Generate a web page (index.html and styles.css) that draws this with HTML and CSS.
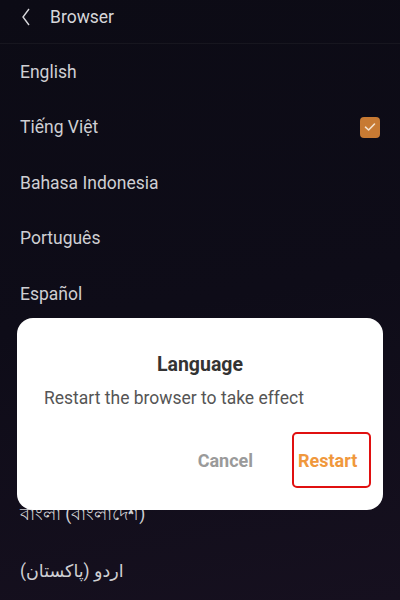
FILE: index.html
```html
<!DOCTYPE html>
<html>
<head>
<meta charset="utf-8">
<link rel="stylesheet" href="styles.css">
</head>
<body>
<div class="screen">
  <header class="top">
    <svg class="back" width="10" height="20" viewBox="0 0 10 20"><path d="M8 2 L2 10 L8 18" fill="none" stroke="#d8d8dc" stroke-width="1.4"/></svg>
    <span class="title">Browser</span>
  </header>
  <ul class="list">
    <li class="row">English</li>
    <li class="row">Tiếng Việt<span class="check"><svg width="12" height="10" viewBox="0 0 12 10"><path d="M1.5 5.2 L4.6 8 L10.5 2" fill="none" stroke="#f3e2cf" stroke-width="1.6" stroke-linecap="round" stroke-linejoin="round"/></svg></span></li>
    <li class="row">Bahasa Indonesia</li>
    <li class="row">Português</li>
    <li class="row">Español</li>
    <li class="row covered">Русский</li>
    <li class="row covered">ไทย</li>
    <li class="row covered">हिन्दी</li>
    <li class="row">বাংলা (বাংলাদেশ)</li>
    <li class="row rtl">اردو (پاکستان)</li>
  </ul>
  <div class="dialog">
    <h2 class="dlg-title">Language</h2>
    <p class="dlg-text">Restart the browser to take effect</p>
    <div class="actions">
      <span class="btn cancel">Cancel</span>
      <span class="btn restart">Restart</span>
    </div>
  </div>
</div>
</body>
</html>
```

FILE: styles.css
```css
* { box-sizing: border-box; }
html, body { margin: 0; padding: 0; }
body {
  width: 400px;
  height: 600px;
  overflow: hidden;
  font-family: Roboto, "Noto Sans", "DejaVu Sans", sans-serif;
}
.screen {
  position: relative;
  width: 400px;
  height: 600px;
  background: linear-gradient(170deg, #0c0b15 0%, #0e0c18 50%, #16101f 100%);
  overflow: hidden;
}
.top {
  height: 44px;
  display: flex;
  align-items: center;
  padding-left: 21px;
  padding-bottom: 10px;
  border-bottom: 1px solid #17161f;
}
.back { margin-right: 19px; }
.title {
  color: #d6d6da;
  font-size: 17.5px;
}
.list {
  list-style: none;
  margin: 0;
  padding: 0;
}
.row {
  height: 55.5px;
  display: flex;
  align-items: center;
  justify-content: space-between;
  padding: 0 20px;
  color: #cfcfd3;
  font-size: 17.5px;
}
.covered { visibility: hidden; }
.rtl { justify-content: flex-start; }
.check {
  width: 20px;
  height: 21px;
  border-radius: 4px;
  background: #c77a33;
  display: flex;
  align-items: center;
  justify-content: center;
}
.dialog {
  position: absolute;
  left: 17px;
  top: 318px;
  width: 366px;
  height: 192px;
  background: #fff;
  border-radius: 16px;
  padding: 34px 27px 0 27px;
}
.dlg-title {
  margin: 0;
  text-align: center;
  font-size: 19.5px;
  font-weight: bold;
  color: #333;
  line-height: 26px;
}
.dlg-text {
  margin: 8px 0 0 0;
  color: #555;
  font-size: 17.5px;
  line-height: 24px;
}
.actions {
  display: flex;
  justify-content: flex-end;
  align-items: center;
  margin-top: 22px;
  margin-right: -15px;
  gap: 39px;
}
.btn {
  font-size: 18px;
  font-weight: bold;
}
.cancel { color: #9a9a9a; }
.restart {
  color: #f0983c;
  border: 2px solid #e01010;
  border-radius: 5px;
  width: 79px;
  height: 56px;
  display: flex;
  align-items: center;
  padding-left: 4px;
}
```
